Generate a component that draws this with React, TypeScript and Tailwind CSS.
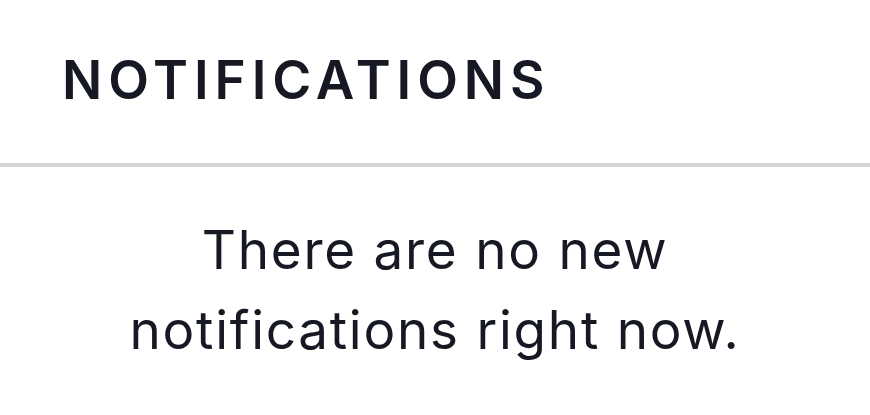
import React from "react";

export default function App() {
  return (
    <div className="w-[870px] h-[415px] bg-white text-[#161823]" style={{ fontFamily: "Inter, 'Noto Sans', sans-serif" }}>
      <div className="pl-[62px] pt-[40px] pb-[43px]">
        <h1 className="text-[53px] leading-[80px] font-semibold tracking-[5.9px]">NOTIFICATIONS</h1>
      </div>
      <div className="h-[4px] bg-[#d4d4d4]" />
      <p className="pt-[43px] text-center text-[53px] leading-[80px] tracking-[1.75px] px-[100px]">
        There are no new notifications right now.
      </p>
    </div>
  );
}
